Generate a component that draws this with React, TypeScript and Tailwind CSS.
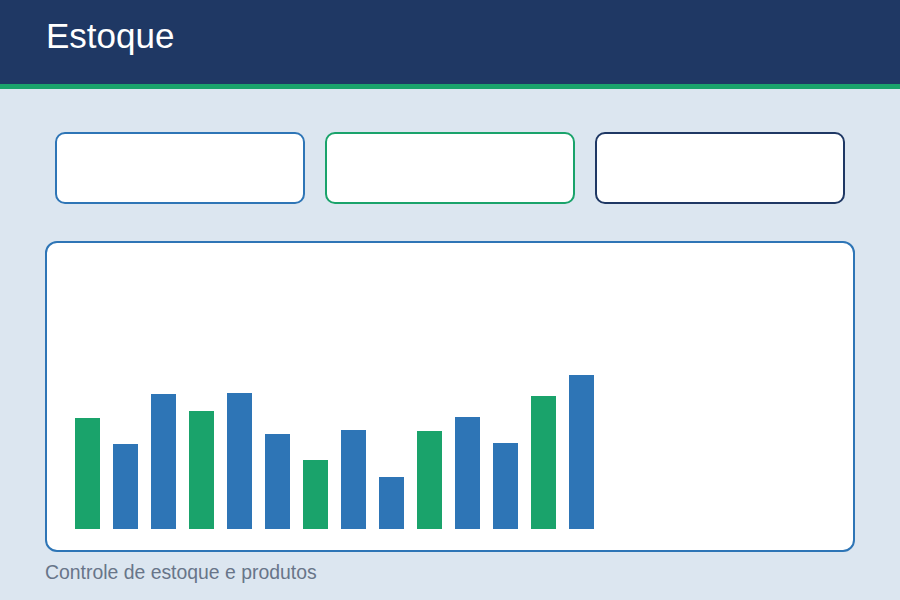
const bars = [
  { h: 111, c: "green" },
  { h: 85, c: "blue" },
  { h: 135, c: "blue" },
  { h: 118, c: "green" },
  { h: 136, c: "blue" },
  { h: 95, c: "blue" },
  { h: 69, c: "green" },
  { h: 99, c: "blue" },
  { h: 52, c: "blue" },
  { h: 98, c: "green" },
  { h: 112, c: "blue" },
  { h: 86, c: "blue" },
  { h: 133, c: "green" },
  { h: 154, c: "blue" },
];

const App = () => {
  return (
    <div className="w-[900px] h-[600px] overflow-hidden bg-[#dce6f0] font-['Liberation_Sans',Arial,sans-serif]">
      <header className="h-[89px] bg-[#1f3864] border-b-[5px] border-[#1aa36b] pl-[46px] pt-[18px]">
        <h1 className="text-[35px] leading-[35px] text-white">Estoque</h1>
      </header>

      <main className="px-[45px]">
        <div className="flex gap-5 px-[10px] mt-[43px]">
          <div className="flex-1 h-[72px] bg-white border-2 border-[#2e75b6] rounded-[10px]" />
          <div className="flex-1 h-[72px] bg-white border-2 border-[#1aa36b] rounded-[10px]" />
          <div className="flex-1 h-[72px] bg-white border-2 border-[#1f3864] rounded-[10px]" />
        </div>

        <div className="mt-[37px] h-[311px] bg-white border-2 border-[#2e75b6] rounded-[12px] flex items-end gap-[13px] pl-[28px] pb-[21px]">
          {bars.map((b, i) => (
            <div
              key={i}
              className={b.c === "green" ? "w-[25px] bg-[#1aa36b]" : "w-[25px] bg-[#2e75b6]"}
              style={{ height: b.h }}
            />
          ))}
        </div>

        <p className="mt-[8px] text-[19.4px] leading-[24px] text-[#687589]">Controle de estoque e produtos</p>
      </main>
    </div>
  );
};

export default App;
